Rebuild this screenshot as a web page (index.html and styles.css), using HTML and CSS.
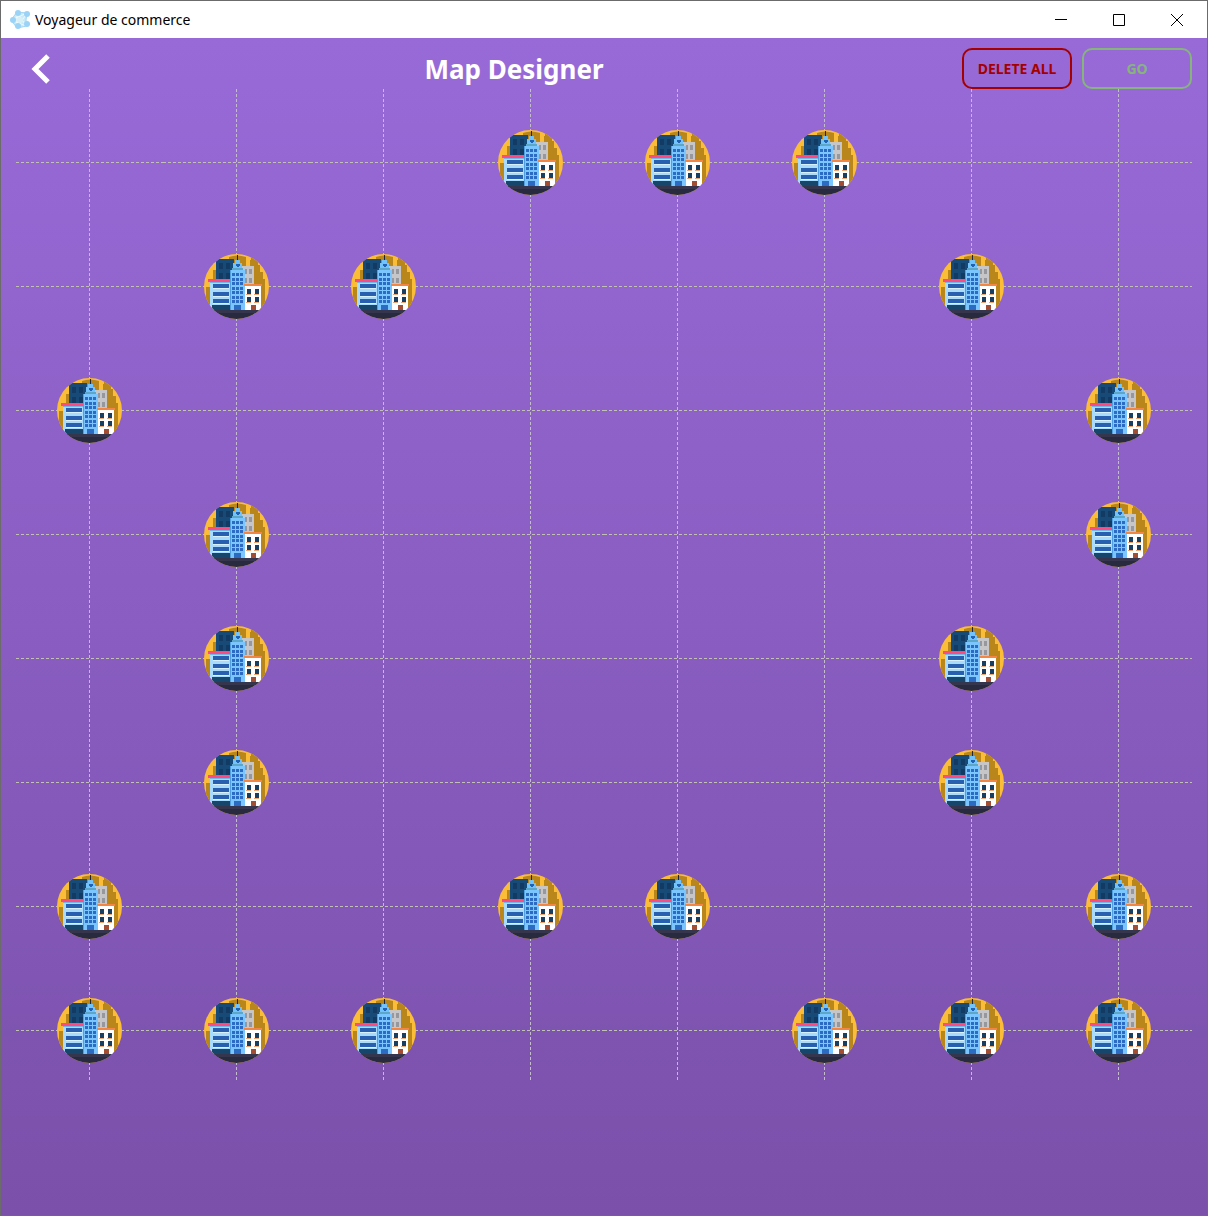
FILE: index.html
```html
<!DOCTYPE html>
<html lang="fr">
<head>
<meta charset="utf-8">
<meta name="viewport" content="width=device-width, initial-scale=1">
<title>Voyageur de commerce</title>
<link rel="stylesheet" href="styles.css">
</head>
<body>
<svg class="sprites" aria-hidden="true">
  <defs>
    <clipPath id="disc"><circle cx="33.500" cy="33.500" r="32.500"/></clipPath>
    <symbol id="city" viewBox="1 1 65 65">
      <g clip-path="url(#disc)">
        <rect width="66" height="66" fill="#fbbd37"/>
        <path d="M10 17h5v42h-5zM26 4q8-3 17 0v50H26zM39 14h8V7h1V4h7v8h2v7h3v7h2v36H39zM3 34h4v25H3z" fill="#b9861c"/>
        <rect x="13" y="6" width="18" height="36" fill="#174a77"/>
        <path d="M16 10h4v6h-4zM23 10h4v6h-4zM16 20h4v6h-4zM23 20h4v6h-4z" fill="#123a63"/>
        <rect x="39" y="13" width="12" height="22" fill="#c6c6c8"/>
        <path d="M42 16h2v5h-2zM46 16h3v5h-3zM42 25h2v5h-2zM46 25h3v5h-3z" fill="#96989d"/>
        <rect x="7" y="29" width="20" height="29" fill="#a9dcfc"/>
        <rect x="7" y="29" width="20" height="1" fill="#70b7ed"/>
        <path d="M10 31h16v4H10zM10 39h16v4H10zM10 46h16v4H10z" fill="#285fae"/>
        <path d="M10 35h16v1H10zM10 43h16v1H10zM10 50h16v1H10z" fill="#d7f1ff"/>
        <rect x="9" y="52" width="18" height="6" fill="#16466c"/>
        <rect x="5" y="26" width="22" height="3" fill="#ff4a80"/>
        <rect x="34" y="2" width="1" height="5" fill="#202538"/>
        <path d="M32 7h5v3h2v5h-9v-5h2z" fill="#72c2fb"/>
        <path d="M33 11h4v2h-1v1h-2v-1h-1z" fill="#2362b0"/>
        <rect x="29" y="15" width="11" height="2" fill="#5ca7c7"/>
        <rect x="27" y="17" width="15" height="41" fill="#7cc6ff"/>
        <rect x="27" y="17" width="1" height="41" fill="#529fdf"/>
        <path d="M29 20h3v3h-3zM33 20h3v3h-3zM37 20h3v3h-3zM29 25h3v3h-3zM33 25h3v3h-3zM37 25h3v3h-3zM29 29h3v3h-3zM33 29h3v3h-3zM37 29h3v3h-3zM29 34h3v3h-3zM33 34h3v3h-3zM37 34h3v3h-3zM29 38h3v3h-3zM33 38h3v3h-3zM37 38h3v3h-3zM29 43h3v3h-3zM33 43h3v3h-3zM37 43h3v3h-3zM29 47h3v3h-3zM33 47h3v3h-3zM37 47h3v3h-3zM31 52h7v6h-7z" fill="#2b6bc4"/>
        <rect x="42" y="33" width="16" height="25" fill="#fff"/>
        <rect x="41" y="31" width="18" height="2" fill="#f28642"/>
        <path d="M43 41h5v1h-5zM51 41h5v1h-5zM43 49h5v1h-5zM51 49h5v1h-5z" fill="#f3a66f"/>
        <path d="M44 36h4v5h-4zM52 36h4v5h-4zM44 44h4v5h-4zM52 44h4v5h-4z" fill="#173f61"/>
        <rect x="48" y="52" width="5" height="6" fill="#a34d32"/>
        <rect y="57" width="66" height="9" fill="#282a40"/>
        <rect y="57" width="66" height="3" fill="#35354d"/>
      </g>
    </symbol>
  </defs>
</svg>
<div class="window">
  <div class="titlebar">
    <svg class="app-icon" viewBox="0 0 22 22" aria-hidden="true">
      <path d="M8 3l10 1-1 7 1 6-10 2-6-8z" fill="#c9eaf7" stroke="#a5d6ee"/>
      <path d="M8 3l9 14M18 4L8 19M2 11l15 6M2 11l16-7M8 3v16" stroke="#eefaff" fill="none"/>
      <circle cx="11" cy="11" r="3" fill="#d9f1f6"/>
      <g fill="#9bd3f7"><circle cx="9" cy="4" r="3"/><circle cx="18" cy="5" r="3"/><circle cx="4" cy="11" r="3"/><circle cx="9" cy="17" r="3"/><circle cx="18" cy="15" r="3"/></g>
    </svg>
    <span class="app-name">Voyageur de commerce</span>
    <button class="caption" type="button" aria-label="Minimize"><svg viewBox="0 0 12 12"><path d="M0 5.500h12"/></svg></button>
    <button class="caption" type="button" aria-label="Maximize"><svg viewBox="0 0 12 12"><path d="M.5.500h11v11H.500z"/></svg></button>
    <button class="caption" type="button" aria-label="Close"><svg viewBox="0 0 12 12"><path d="M0 0l12 12M12 0L0 12"/></svg></button>
  </div>
  <main class="designer">
    <header class="toolbar">
      <button class="back" type="button" aria-label="Back"><svg viewBox="0 0 20 30"><path d="M17 2L4 15l13 13"/></svg></button>
      <h1>Map Designer</h1>
      <div class="actions">
        <button class="action delete" type="button">DELETE ALL</button>
        <button class="action go" type="button">GO</button>
      </div>
    </header>
    <div class="map" id="map"></div>
  </main>
</div>
<script src="map.js"></script>
</body>
</html>
```
FILE: styles.css
```css
* { box-sizing: border-box; }
body {
  margin: 0;
  font-family: "Segoe UI", "Noto Sans", "Open Sans", sans-serif;
}
button { margin: 0; padding: 0; border: 0; background: none; font: inherit; }
.sprites { position: absolute; width: 0; height: 0; }
.window {
  display: flex;
  flex-direction: column;
  min-height: 100vh;
  border: 1px solid #6b6b6b;
}
.titlebar {
  display: flex;
  align-items: center;
  height: 37px;
  padding: 0 1px 0 8px;
  background: #fff;
}
.app-icon { width: 22px; height: 22px; margin-right: 4px; }
.app-name { flex: 1; font-size: 14px; line-height: 20px; color: #000; }
.caption { display: grid; place-items: center; width: 58px; height: 37px; }
.caption svg { width: 12px; height: 12px; fill: none; stroke: #000; }
.designer {
  flex: 1;
  padding: 10px 15px 0;
  background: linear-gradient(#986ad8, #7a50aa);
}
.toolbar { display: flex; align-items: center; height: 41px; }
.back { display: flex; align-items: center; justify-content: center; width: 50px; height: 41px; }
.back svg { width: 20px; height: 30px; fill: none; stroke: #fff; stroke-width: 5px; }
h1 { flex: 1; margin: 0; font-size: 26px; line-height: 40px; text-align: center; color: #fff; }
.actions { display: flex; gap: 10px; }
.action {
  width: 110px;
  height: 41px;
  border: 2px solid;
  border-radius: 10px;
  font-size: 14px;
  font-weight: 700;
}
.delete { color: #a50000; }
.go { color: #86b57c; }
.map { display: grid; grid-template-columns: repeat(8, 1fr); grid-auto-rows: 124px; }
.cell {
  display: grid;
  place-items: center;
  padding-top: 23px;
  background:
    repeating-linear-gradient(90deg, #c2c0b4 0 3px, transparent 3px 5px) 0 73px / 100% 1px no-repeat,
    repeating-linear-gradient(#c5bccb 0 3px, transparent 3px 5px) 73px 0 / 1px 100% no-repeat;
}
.cell svg { display: block; width: 65px; height: 65px; }
```
FILE: map.js
```js
// One string per map row; "#" marks a city.
const rows = [
  "...###..",
  ".##...#.",
  "#......#",
  ".#.....#",
  ".#....#.",
  ".#....#.",
  "#..##..#",
  "###..###",
];
const city = '<svg aria-hidden="true"><use href="#city"/></svg>';
document.getElementById("map").innerHTML = rows
  .map((row, y) => [...row].map((c, x) =>
    `<button class="cell" type="button" aria-label="${x + 1}, ${y + 1}">${c === "#" ? city : ""}</button>`
  ).join(""))
  .join("");
```
